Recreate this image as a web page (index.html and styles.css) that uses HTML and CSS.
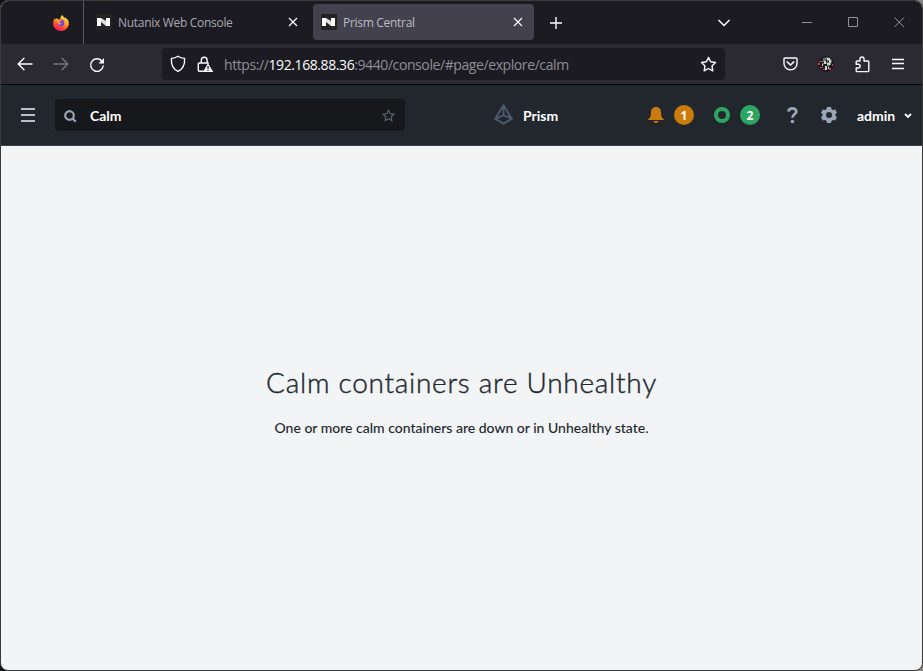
FILE: index.html
```html
<!DOCTYPE html>
<html lang="en">
<head>
<meta charset="utf-8">
<title>Prism Central</title>
<link rel="stylesheet" href="styles.css">
</head>
<body>
<div class="window">
  <div class="tabbar">
    <svg class="firefox" width="16" height="16" viewBox="0 0 16 16">
      <defs>
        <linearGradient id="flame" x1="0.8" y1="0" x2="0.3" y2="1"><stop offset="0" stop-color="#fff04a"/><stop offset=".4" stop-color="#ffa52a"/><stop offset=".7" stop-color="#ff4a35"/><stop offset="1" stop-color="#f0146a"/></linearGradient>
      </defs>
      <path fill="url(#flame)" d="M9.500 0c.3 1.300 1.200 1.900 2.200 3l.6-.4C14.500 4 16 6 15.800 9c-.3 4-3.600 7-7.800 7S.2 13 .1 8.800C0 6.500.8 4.500 2 3l.3 1.500L4 2.800l.4 1.500 2.800.2C7 3 8 .8 9.500 0z"/>
      <circle cx="8" cy="7.900" r="3.300" fill="#7648d8"/>
      <path fill="#ff9a2c" d="M2.600 4.700c1.700-.8 3.200-.5 4.300.3l1.700.6c-.2 1-1.800 1-2 1.700 0 .9 1.200 1.500 2.400.9-1 2-3.700 1.600-4.400.2C4.100 6.800 3.300 6 2.600 4.700z"/>
    </svg>
    <div class="tab tab-first">
      <svg class="favicon" width="16" height="16" viewBox="0 0 16 16"><rect width="16" height="16" rx="1" fill="#232323"/><path fill="#fff" d="M1 4h4v8H1zM10 4h4v8h-4z"/><path fill="#ddd" d="M5 4l5 3v5L5 8z"/></svg>
      <span class="tab-title">Nutanix Web Console</span>
      <svg class="tab-close" width="10" height="10" viewBox="0 0 10 10"><path d="M1 1l8 8M9 1L1 9"/></svg>
    </div>
    <div class="tab tab-active">
      <svg class="favicon" width="16" height="16" viewBox="0 0 16 16"><rect width="16" height="16" rx="1" fill="#232323"/><path fill="#fff" d="M1 4h4v8H1zM10 4h4v8h-4z"/><path fill="#ddd" d="M5 4l5 3v5L5 8z"/></svg>
      <span class="tab-title">Prism Central</span>
      <svg class="tab-close" width="10" height="10" viewBox="0 0 10 10"><path d="M1 1l8 8M9 1L1 9"/></svg>
    </div>
    <svg class="new-tab" width="14" height="14" viewBox="0 0 14 14"><path d="M7 1v12M1 7h12"/></svg>
    <svg class="tab-list" width="14" height="8" viewBox="0 0 14 8"><path d="M1.500 1L7 6.500 12.500 1"/></svg>
    <svg class="win-min" width="10" height="11" viewBox="0 0 10 11"><path d="M0 5.500h10"/></svg>
    <svg class="win-max" width="11" height="11" viewBox="0 0 11 11"><path d="M.5.500h9v9h-9z"/></svg>
    <svg class="win-close" width="11" height="11" viewBox="0 0 11 11"><path d="M.5.500l9.500 9.500M10 .5L.5 10"/></svg>
  </div>

  <div class="toolbar">
    <svg class="back" width="16" height="14" viewBox="0 0 16 14"><path d="M15 7H1.500M7 1.200L1.200 7 7 12.800"/></svg>
    <svg class="forward" width="16" height="14" viewBox="0 0 16 14"><path d="M1 7h13.500M9 1.200L14.800 7 9 12.800"/></svg>
    <svg class="reload" width="16" height="16" viewBox="0 0 16 16"><path d="M13.200 4.500A6.300 6.300 0 1 0 14.200 9"/><path class="solid" d="M15 1v5.400H9.600z"/></svg>
    <div class="urlbar">
      <svg class="shield" width="16" height="18" viewBox="0 0 16 18"><path d="M8 1.200c2 1.400 4 2 6.600 2.200.4 6-1 10.400-6.600 13C2.400 13.800 1 9.400 1.400 3.400 4 3.200 6 2.600 8 1.200z"/></svg>
      <svg class="lock" width="17" height="17" viewBox="0 0 17 17"><path d="M4.300 7V4.200a2.900 2.900 0 0 1 5.800 0V7M6.500 15.200H2.300a1 1 0 0 1-1-1V8a1 1 0 0 1 1-1h9"/><path class="warn" fill-rule="evenodd" d="M11 7.200l5.300 8.800H5.900zM10.400 10v3h1.300v-3zm0 3.900v1.200h1.300v-1.200z"/></svg>
      <div class="url"><span>https://</span><b>192.168.88.36</b><span>:9440/console/#page/explore/calm</span></div>
      <svg class="bookmark" width="17" height="17" viewBox="0 0 17 17"><path d="M8.500 1.400l2.100 4.400 4.900.7-3.500 3.400.8 4.900-4.300-2.300-4.300 2.300.8-4.900L1.500 6.500l4.900-.7z"/></svg>
    </div>
    <svg class="pocket" width="15" height="14" viewBox="0 0 15 14"><path d="M2 1h11q1 0 1 1v4.500a6.500 6.300 0 0 1-13 0V2q0-1 1-1z"/><path d="M4.300 5l3.200 3 3.200-3" stroke-width="1.700"/></svg>
    <svg class="profile" width="16" height="16" viewBox="0 0 16 16"><circle cx="8" cy="8" r="7.900" fill="#171919"/><path fill="#65736c" d="M5 2l5-1 4 3-1 5-3 2-2-4-4 2z"/><path fill="#d4d5d0" d="M9 2h3v2H9zM11 4h2v3h-2zM6 5h2v3H6zM9 7h3v2H9zM7 10h2v4H7zM4 8h1v2H4zM10 11h1v2h-1z"/><path fill="#c8405a" d="M1 5h3v1H1zM0 7h2v2H0zM2 11h3v1H2zM11 12h2v2h-2zM14 8h1v2h-1zM5 13h2v1H5z"/><path fill="#131516" d="M8 4h1v2H8zM10 5h1v1h-1zM8 8h1v2H8zM12 9h1v2h-1zM5 6h1v1H5z"/></svg>
    <svg class="extension" width="15" height="17" viewBox="0 0 15 17"><path d="M5 5V3a2 2 0 0 1 4 0v2h4q.8 0 .8.800v9q0 .8-.8.800H2q-.8 0-.8-.8V12h2a1.900 1.900 0 0 0 0-3.800h-2V5.800Q1.200 5 2 5z"/></svg>
    <svg class="app-menu" width="12" height="12" viewBox="0 0 12 12"><path d="M0 1.500h12M0 5.500h12M0 10.500h12"/></svg>
  </div>

  <header class="header">
    <svg class="menu" width="14" height="14" viewBox="0 0 14 14"><path d="M0 1h14M0 7h14M0 13h14"/></svg>
    <div class="search">
      <svg class="magnifier" width="13" height="13" viewBox="0 0 13 13"><circle cx="5.500" cy="5.500" r="4.300"/><path d="M8.300 8.300l3.500 3.500"/></svg>
      <span class="query">Calm</span>
      <svg class="star" width="13" height="13" viewBox="0 0 13 13"><path d="M6.500 1.200l1.600 3.500 3.800.5-2.700 2.600.6 3.800-3.300-1.800-3.300 1.800.6-3.800L1.100 5.200l3.800-.5z"/></svg>
    </div>
    <svg class="prism-logo" width="19" height="21" viewBox="0 0 19 21"><path d="M9.500 1.200L1.200 14.800l8.300 4.800 8.300-4.800zM9.500 1.200v10L1.200 14.800M9.500 11.200l8.300 3.600"/></svg>
    <span class="brand">Prism</span>
    <svg class="bell" width="16" height="16" viewBox="0 0 16 16"><path d="M8 0C4.700 0 3 2.300 3 5.300c0 4-.8 5.800-3 7.200V13h16v-.5c-2.200-1.400-3-3.200-3-7.200C13 2.300 11.300 0 8 0zM5.500 14c.5 2.600 4.500 2.600 5 0z"/></svg>
    <span class="badge badge-alert">1</span>
    <span class="ring"></span>
    <span class="badge badge-task">2</span>
    <svg class="help" width="11" height="17" viewBox="0 0 11 17"><path d="M1.500 4.700C1.700 2.500 3.300 1.400 5.500 1.400c2.300 0 3.800 1.200 3.800 3.100 0 2.800-3.900 2.800-3.900 6.200"/><circle cx="5.400" cy="14.500" r="1.800"/></svg>
    <svg class="gear" width="16" height="16" viewBox="0 0 16 16"><path fill-rule="evenodd" d="M6 0h4l.6 2.300 1.300.8 2.300-.7 1.800 3.300-1.600 1.600v1.400l1.600 1.600-1.800 3.300-2.300-.7-1.300.8L10 16H6l-.6-2.300-1.300-.8-2.300.7L0 10.300l1.600-1.600V7.300L0 5.700l1.800-3.300 2.300.7 1.300-.8zM8 5a3 3 0 1 0 0 6 3 3 0 0 0 0-6z"/></svg>
    <span class="user">admin</span>
    <svg class="caret" width="8" height="6" viewBox="0 0 8 6"><path d="M1 1l3 3 3-3"/></svg>
  </header>

  <main class="content">
    <h1>Calm containers are Unhealthy</h1>
    <p>One or more calm containers are down or in Unhealthy state.</p>
  </main>
</div>
</body>
</html>
```

FILE: styles.css
```css
* { box-sizing: border-box; }

body {
  margin: 0;
  height: 671px;
  overflow: hidden;
  background: linear-gradient(90deg, #111 0 50%, #858480 50%);
  font-family: "Open Sans", "Noto Sans", sans-serif;
}

svg { display: block; flex: none; fill: none; }
span { white-space: nowrap; }

.window {
  width: 923px;
  height: 671px;
  display: flex;
  flex-direction: column;
  border: 1px solid #3b3b3c;
  border-radius: 8px;
  overflow: hidden;
  background: #f2f4f6;
}

.tabbar {
  flex: none;
  height: 43px;
  display: flex;
  align-items: center;
  background: #1c1b22;
  stroke: #fbfbfe;
}

.firefox { margin-left: 52px; stroke: none; }
.favicon { stroke: none; }

.tab { display: flex; align-items: center; }

.tab-first {
  width: 229px;
  height: 43px;
  margin-left: 14px;
  padding: 0 14px 0 12px;
  border-left: 1px solid #58575f;
}

.tab-first .favicon { margin-bottom: 1px; }

.tab-active {
  width: 221px;
  height: 36px;
  margin: 0 0 1px 1px;
  padding: 0 11px 0 8px;
  border-radius: 4px;
  background: #42414d;
}

.tab-title {
  margin-left: 6px;
  padding-top: 1px;
  font-size: 12px;
  line-height: 18px;
  letter-spacing: -0.3px;
  color: #aaa9b2;
}

.tab-active .tab-title { padding-top: 2px; color: #bdbcc5; }
.tab-close { margin-left: auto; margin-bottom: 1px; stroke-width: 1.2; }
.tab-active .tab-close { margin-bottom: 0; }

.new-tab { margin-left: 15px; stroke-width: 1.4; }
.tab-list { margin-left: 154px; stroke-width: 1.5; }
.win-min { margin-left: 71px; stroke: #929198; }
.win-max { margin-left: 36px; stroke: #929198; }
.win-close { margin-left: 35px; stroke: #929198; }

.toolbar {
  flex: none;
  height: 41px;
  display: flex;
  align-items: center;
  border-bottom: 1px solid #08080a;
  background: #2b2a33;
  stroke: #fbfbfe;
  stroke-width: 1.4;
  stroke-linecap: round;
  stroke-linejoin: round;
}

.back { margin-left: 16px; }
.forward { margin-left: 20px; stroke: #77767e; }
.reload { margin: 1px 0 0 20px; }
.reload .solid { fill: #fbfbfe; stroke: none; }

.urlbar {
  width: 563px;
  height: 32px;
  margin-left: 57px;
  padding: 0 8px;
  display: flex;
  align-items: center;
  border-radius: 4px;
  background: #1c1b22;
}

.lock { margin-left: 11px; }
.lock .warn { fill: #fbfbfe; stroke: none; }

.url {
  margin-left: 10px;
  padding-top: 2px;
  display: flex;
  font-size: 14px;
  line-height: 20px;
  letter-spacing: -0.41px;
  color: #8f8e96;
}

.url b { font-weight: 400; color: #fbfbfe; }
.bookmark { margin-left: auto; }
.pocket { margin-left: 58px; }
.profile { margin-left: 20px; stroke: none; }
.extension { margin-left: 21px; }
.app-menu { margin-left: 22px; stroke-linecap: butt; }

.header {
  flex: none;
  height: 61px;
  display: flex;
  align-items: center;
  border-bottom: 1px solid #3a4149;
  background: #22272e;
  font-family: Lato, sans-serif;
  font-size: 14px;
  font-weight: 700;
  color: #fff;
}

.menu { margin-left: 20px; stroke: #b8bfca; stroke-width: 2; }

.search {
  width: 350px;
  height: 32px;
  margin-left: 20px;
  padding: 0 10px 0 9px;
  display: flex;
  align-items: center;
  border-radius: 4px;
  background: #16181b;
}

.magnifier { margin-top: 3px; stroke: #9aa5b5; stroke-width: 2.2; }
.query { margin-left: 13px; }
.star { margin-left: auto; stroke: #56616f; stroke-width: 1.2; }
.prism-logo { margin: 0 0 1px 89px; stroke: #4c596a; stroke-width: 2; stroke-linejoin: round; }
.brand { width: 36px; margin-left: 10px; }
.bell { margin-left: 89px; fill: #ca7b0b; }

.badge {
  width: 20px;
  height: 20px;
  margin-left: 10px;
  border-radius: 50%;
  font: 700 12px/21px "Open Sans", sans-serif;
  text-align: center;
}

.badge-alert { background: #ca7b0b; }
.badge-task { background: #2ea663; }

.ring {
  width: 16px;
  height: 16px;
  margin-left: 20px;
  border: 4.500px solid #2ea663;
  border-radius: 50%;
}

.help { margin-left: 27px; stroke: #9aa5b5; stroke-width: 2.8; }
.help circle { fill: #9aa5b5; stroke: none; }
.gear { margin-left: 23px; fill: #9aa5b5; }
.user { width: 39px; margin-left: 20px; }
.caret { margin: 2px 0 0 8px; stroke: #fff; stroke-width: 1.8; }

.content {
  flex: 1;
  padding-top: 216px;
  text-align: center;
  font-family: Lato, sans-serif;
  color: #22272e;
}

h1 {
  margin: 0;
  font-size: 28px;
  line-height: 40px;
  font-weight: 300;
  letter-spacing: 0.72px;
  -webkit-text-stroke: 0.4px #22272e;
}

p {
  margin: 16px 0 0;
  font-size: 14px;
  line-height: 20px;
  font-weight: 500;
}
```
